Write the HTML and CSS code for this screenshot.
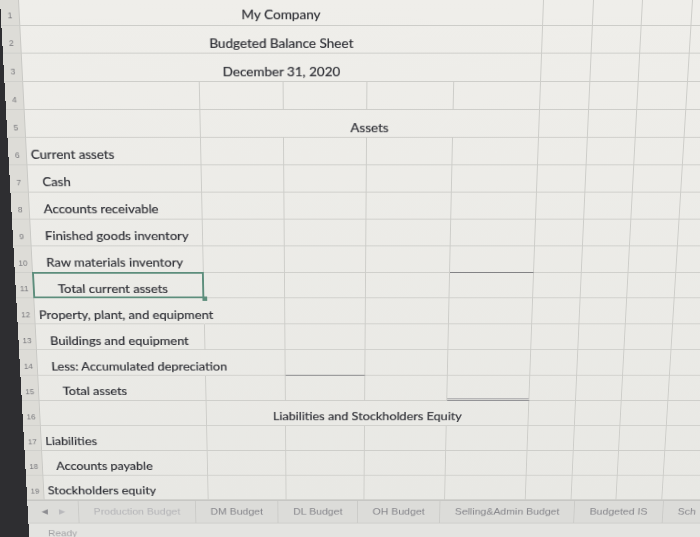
FILE: index.html
```html
<!DOCTYPE html>
<html>
<head>
<meta charset="utf-8">
<link rel="stylesheet" href="styles.css">
</head>
<body>
<div class="screen">
  <div class="sheet">
    <div class="rh r1">1</div><div class="c t r1">My Company</div><div class="c"></div><div class="c"></div><div class="c"></div><div class="c"></div><div class="c"></div>
    <div class="rh">2</div><div class="c t">Budgeted Balance Sheet</div><div class="c"></div><div class="c"></div><div class="c"></div><div class="c"></div><div class="c"></div>
    <div class="rh">3</div><div class="c t">December 31, 2020</div><div class="c"></div><div class="c"></div><div class="c"></div><div class="c"></div><div class="c"></div>
    <div class="rh">4</div><div class="c"></div><div class="c"></div><div class="c"></div><div class="c"></div><div class="c"></div><div class="c"></div><div class="c"></div><div class="c"></div><div class="c"></div><div class="c"></div>
    <div class="rh">5</div><div class="c"></div><div class="c m">Assets</div><div class="c"></div><div class="c"></div><div class="c"></div><div class="c"></div><div class="c"></div>
    <div class="rh">6</div><div class="c a">Current assets</div><div class="c"></div><div class="c"></div><div class="c"></div><div class="c"></div><div class="c"></div><div class="c"></div><div class="c"></div><div class="c"></div><div class="c"></div>
    <div class="rh">7</div><div class="c a i1">Cash</div><div class="c"></div><div class="c"></div><div class="c"></div><div class="c"></div><div class="c"></div><div class="c"></div><div class="c"></div><div class="c"></div><div class="c"></div>
    <div class="rh">8</div><div class="c a i1">Accounts receivable</div><div class="c"></div><div class="c"></div><div class="c"></div><div class="c"></div><div class="c"></div><div class="c"></div><div class="c"></div><div class="c"></div><div class="c"></div>
    <div class="rh">9</div><div class="c a i1">Finished goods inventory</div><div class="c"></div><div class="c"></div><div class="c"></div><div class="c"></div><div class="c"></div><div class="c"></div><div class="c"></div><div class="c"></div><div class="c"></div>
    <div class="rh">10</div><div class="c a i1">Raw materials inventory</div><div class="c"></div><div class="c"></div><div class="c"></div><div class="c ul"></div><div class="c"></div><div class="c"></div><div class="c"></div><div class="c"></div><div class="c"></div>
    <div class="rh">11</div><div class="c a i2 sel">Total current assets</div><div class="c"></div><div class="c"></div><div class="c"></div><div class="c"></div><div class="c"></div><div class="c"></div><div class="c"></div><div class="c"></div><div class="c"></div>
    <div class="rh">12</div><div class="c a ov">Property, plant, and equipment</div><div class="c"></div><div class="c"></div><div class="c"></div><div class="c"></div><div class="c"></div><div class="c"></div><div class="c"></div><div class="c"></div><div class="c"></div>
    <div class="rh">13</div><div class="c a i1">Buildings and equipment</div><div class="c"></div><div class="c"></div><div class="c"></div><div class="c"></div><div class="c"></div><div class="c"></div><div class="c"></div><div class="c"></div><div class="c"></div>
    <div class="rh">14</div><div class="c a i1 ov">Less: Accumulated depreciation</div><div class="c"></div><div class="c ul"></div><div class="c"></div><div class="c"></div><div class="c"></div><div class="c"></div><div class="c"></div><div class="c"></div><div class="c"></div>
    <div class="rh">15</div><div class="c a i2">Total assets</div><div class="c"></div><div class="c"></div><div class="c"></div><div class="c dul"></div><div class="c"></div><div class="c"></div><div class="c"></div><div class="c"></div><div class="c"></div>
    <div class="rh">16</div><div class="c"></div><div class="c m">Liabilities and Stockholders Equity</div><div class="c"></div><div class="c"></div><div class="c"></div><div class="c"></div><div class="c"></div>
    <div class="rh">17</div><div class="c a">Liabilities</div><div class="c"></div><div class="c"></div><div class="c"></div><div class="c"></div><div class="c"></div><div class="c"></div><div class="c"></div><div class="c"></div><div class="c"></div>
    <div class="rh">18</div><div class="c a i1">Accounts payable</div><div class="c"></div><div class="c"></div><div class="c"></div><div class="c"></div><div class="c"></div><div class="c"></div><div class="c"></div><div class="c"></div><div class="c"></div>
    <div class="rh">19</div><div class="c a">Stockholders equity</div><div class="c"></div><div class="c"></div><div class="c"></div><div class="c"></div><div class="c"></div><div class="c"></div><div class="c"></div><div class="c"></div><div class="c"></div>
  </div>
  <div class="tabs">
    <div class="nav"><span class="arr">&#9664;</span><span class="arr dim">&#9654;</span></div>
    <div class="tab faded">Production Budget</div>
    <div class="tab">DM Budget</div>
    <div class="tab">DL Budget</div>
    <div class="tab">OH Budget</div>
    <div class="tab">Selling&amp;Admin Budget</div>
    <div class="tab">Budgeted IS</div>
    <div class="tab">Sch</div>
  </div>
  <div class="status">Ready</div>
</div>
</body>
</html>
```
FILE: styles.css
```css
html, body {
  margin: 0;
  padding: 0;
  width: 700px;
  height: 537px;
  overflow: hidden;
  background: #2e2e31;
}

.screen {
  width: 802px;
  height: 660px;
  background: linear-gradient(#efeeea, #e7e7e3);
  transform-origin: 325px 0;
  transform: perspective(1600px) rotateX(-15deg);
  font-family: Lato, "Open Sans", sans-serif;
  color: #303137;
}

.sheet {
  display: grid;
  grid-template-columns: 19px 179px 85px 85px 88px 88px 49.5px 49.5px 49.5px 49.5px 60px;
  grid-template-rows: 26.5px repeat(18, 29.9px);
}

.rh {
  box-sizing: border-box;
  background: #dddcd7;
  border-right: 1px solid #c9c9c5;
  border-bottom: 1px solid #cfcfcb;
  font-family: "Liberation Sans", Arial, sans-serif;
  font-size: 8.5px;
  color: #77777b;
  display: flex;
  align-items: flex-end;
  justify-content: center;
  padding-bottom: 5px;
}

.c {
  box-sizing: border-box;
  border-right: 1px solid #cdcdc9;
  border-bottom: 1px solid #cdcdc9;
  display: flex;
  align-items: flex-end;
  padding: 0 0 1.5px 4px;
  font-size: 13.6px;
  line-height: 18px;
  white-space: nowrap;
  position: relative;
  -webkit-text-stroke: 0.2px #303137;
}

.t {
  grid-column: span 5;
  justify-content: center;
  padding-left: 0;
}

.m {
  grid-column: span 4;
  justify-content: center;
  padding-left: 0;
}

.i1 { padding-left: 14.5px; }
.i2 { padding-left: 25.5px; }

.ov {
  overflow: visible;
  border-right-color: transparent;
}

.ul { border-bottom: 1px solid #77777a; }
.dul { border-bottom: 3px double #8e8e92; }

.sel::after {
  content: "";
  position: absolute;
  left: -1px;
  top: -1px;
  right: -1px;
  bottom: -1px;
  border: 2px solid #5d8e7c;
}

.sel::before {
  content: "";
  position: absolute;
  right: -4px;
  bottom: -4px;
  width: 5px;
  height: 5px;
  background: #5d8e7c;
  z-index: 1;
}

.tabs {
  display: flex;
  height: 29px;
  background: #dcdcd9;
  border-top: 1px solid #c6c6c3;
  border-bottom: 1px solid #cacac7;
  box-sizing: border-box;
  font-family: "Liberation Sans", Arial, sans-serif;
  font-size: 11.5px;
  color: #85858a;
}

.nav {
  width: 55px;
  display: flex;
  align-items: center;
  justify-content: center;
  gap: 12px;
  font-size: 9px;
  color: #8d8d91;
}

.arr.dim { color: #b9b9bc; }

.tab {
  display: flex;
  align-items: center;
  padding: 0 16px;
  border-left: 1px solid #cbcbc8;
  white-space: nowrap;
}

.tab.faded { color: #b3b3b6; }

.status {
  height: 40px;
  background: #e4e4e1;
  font-family: "Liberation Sans", Arial, sans-serif;
  font-size: 11px;
  color: #a2a2a5;
  padding: 6px 0 0 21px;
  box-sizing: border-box;
}
```
